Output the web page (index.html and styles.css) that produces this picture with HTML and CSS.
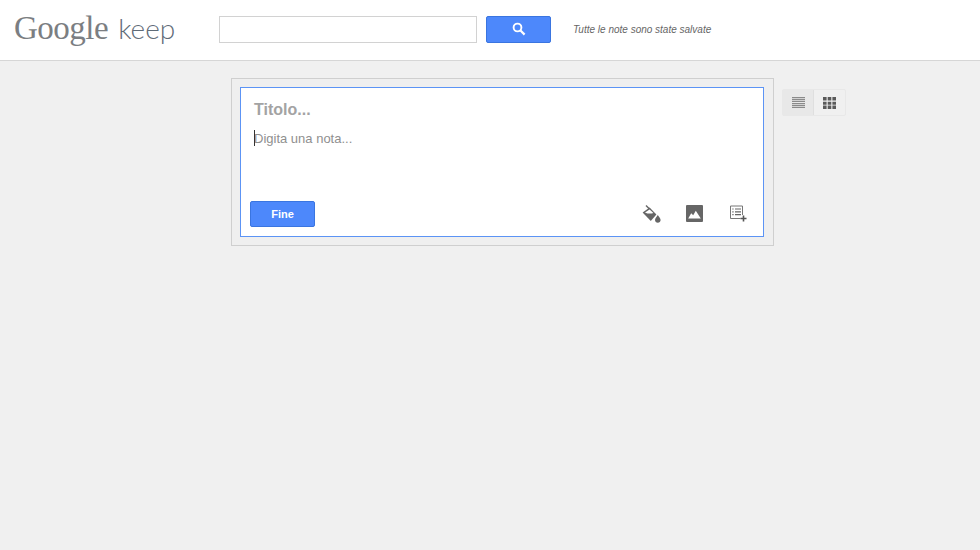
FILE: index.html
```html
<!DOCTYPE html>
<html>
<head>
	<title>Google Keep</title>
	<link rel="stylesheet" href="styles.css">
</head>
<body>
	<header class="top-bar">
		<div class="logo"><span class="logo-google">Google</span><span class="logo-keep">keep</span></div>
		<input class="search-input" type="text">
		<button class="search-button" type="button">
			<svg width="14" height="14" viewBox="0 0 14 14">
				<circle cx="5.5" cy="5.5" r="3.9" fill="none" stroke="#fff" stroke-width="1.9"/>
				<path d="M8.5 8.5L12.6 12.6" stroke="#fff" stroke-width="2.2" fill="none"/>
			</svg>
		</button>
		<span class="save-status">Tutte le note sono state salvate</span>
	</header>
	<main class="content">
		<div class="note-frame">
			<div class="note-editor">
				<div class="note-title">Titolo...</div>
				<div class="note-body"><span class="caret"></span>Digita una nota...</div>
				<div class="note-actions">
					<button class="done-button" type="button">Fine</button>
					<div class="note-tools">
						<!-- vernice -->
						<svg class="paint-icon" width="20" height="18" viewBox="0 0 20 18">
							<path d="M4 .6L8 4.6" stroke="#666" stroke-width="1.4" fill="none"/>
							<path d="M.6 7.6L7.6 2.6L14.4 9.4L8.8 16Z" fill="#666"/>
							<path d="M3 7.4L7.6 4.4L11.4 8C8.6 9 5.5 8.7 3 7.4Z" fill="#fff"/>
							<path d="M15.8 10C16.8 12 18.6 13.2 18.6 15C18.6 16.6 17.4 17.8 15.8 17.8C14.2 17.8 13 16.6 13 15C13 13.2 14.8 12 15.8 10Z" fill="#666"/>
						</svg>
						<!-- immagine -->
						<svg class="image-icon" width="17" height="17" viewBox="0 0 17 17">
							<rect width="17" height="17" rx="1" fill="#666"/>
							<path d="M2.2 13.4L5.2 8.2L7.2 10.2L9.8 5.8L14.8 13.4Z" fill="#fff"/>
						</svg>
						<!-- lista -->
						<svg class="list-icon" width="18" height="17" viewBox="0 0 18 17">
							<path d="M11.5 13.5H1.5V1H13.5V10" fill="none" stroke="#777" stroke-width="1"/>
							<path d="M3.3 4H4.6M6 4H12M3.3 6.8H4.6M6 6.8H12M3.3 9.6H4.6M6 9.6H12" stroke="#666" stroke-width="1.2" fill="none"/>
							<path d="M14.5 10.5V16.5M11.5 13.5H17.5" stroke="#555" stroke-width="1.6" fill="none"/>
						</svg>
					</div>
				</div>
			</div>
		</div>
		<div class="view-switch">
			<div class="view-button active">
				<svg width="13" height="11" viewBox="0 0 13 11">
					<path d="M0 .6H13M0 2.6H13M0 4.5H13M0 6.5H13M0 8.4H13M0 10.4H13" stroke="#8a8a8a" stroke-width="1.2" fill="none"/>
				</svg>
			</div>
			<div class="view-button">
				<svg width="13" height="12" viewBox="0 0 13 12">
					<path d="M0 0h3.6v3.6H0zM4.7 0h3.6v3.6H4.7zM9.4 0H13v3.6H9.4zM0 4.7h3.6v3.1H0zM4.7 4.7h3.6v3.1H4.7zM9.4 4.7H13v3.1H9.4zM0 8.6h3.6V12H0zM4.7 8.6h3.6V12H4.7zM9.4 8.6H13V12H9.4z" fill="#5a5a5a"/>
				</svg>
			</div>
		</div>
	</main>
</body>
</html>
```

FILE: styles.css
```css
html, body {
	margin: 0;
	height: 100%;
}
body {
	background-color: #f0f0f0;
	font-family: "Liberation Sans", Arial, sans-serif;
	overflow: hidden;
}
button {
	font-family: inherit;
	padding: 0;
	cursor: pointer;
}

.top-bar {
	display: flex;
	align-items: flex-start;
	height: 44px;
	padding: 16px 0 0 14px;
	background-color: #fff;
	border-bottom: 1px solid #d6d6d6;
}
.logo {
	display: flex;
	align-items: baseline;
	width: 205px;
	margin-top: -6px;
	color: #7b7e82;
	white-space: nowrap;
}
.logo-google {
	font-family: "Liberation Serif", serif;
	font-size: 33px;
	letter-spacing: -0.5px;
}
.logo-keep {
	margin-left: 10px;
	font-family: "Lato", sans-serif;
	font-weight: 300;
	font-size: 28px;
	color: #5f6b78;
}
.search-input {
	box-sizing: border-box;
	width: 258px;
	height: 27px;
	margin: 0;
	border: 1px solid #d2d2d2;
	background: #fff;
}
.search-button {
	display: flex;
	align-items: center;
	justify-content: center;
	width: 65px;
	height: 27px;
	margin-left: 9px;
	padding-bottom: 1px;
	background-color: #4d88fb;
	border: 1px solid #3a75e0;
	border-radius: 2px;
}
.save-status {
	margin-left: 22px;
	line-height: 27px;
	font-size: 10px;
	font-style: italic;
	color: #666;
}

.content {
	display: flex;
	align-items: flex-start;
	padding: 17px 0 0 231px;
}
.note-frame {
	box-sizing: border-box;
	width: 543px;
	height: 168px;
	padding: 8px 9px 8px 8px;
	border: 1px solid #cfcfcf;
	background-color: #efefef;
}
.note-editor {
	display: flex;
	flex-direction: column;
	box-sizing: border-box;
	height: 100%;
	padding: 13px 9px 9px 9px;
	border: 1px solid #5c94f5;
	background-color: #fff;
}
.note-title {
	padding-left: 4px;
	font-size: 16px;
	line-height: 18px;
	font-weight: bold;
	color: #a3a3a3;
}
.note-body {
	position: relative;
	margin-top: 11px;
	padding-left: 4px;
	font-size: 13px;
	line-height: 18px;
	color: #8f8f8f;
}
.caret {
	position: absolute;
	left: 4px;
	top: 0;
	width: 1px;
	height: 16px;
	background-color: #333;
}
.note-actions {
	display: flex;
	justify-content: space-between;
	align-items: center;
	margin-top: auto;
}
.done-button {
	width: 65px;
	height: 26px;
	background-color: #4d88fb;
	border: 1px solid #3a75e0;
	border-radius: 2px;
	color: #fff;
	font-size: 11px;
	font-weight: bold;
}
.note-tools {
	display: flex;
	align-items: center;
	gap: 25px;
	padding-right: 7px;
	margin-top: -1px;
}
.paint-icon {
	margin-right: -1px;
}
.image-icon {
	margin-right: 1px;
}

.view-switch {
	display: flex;
	margin: 11px 0 0 8px;
	border: 1px solid #e8e8e8;
	border-radius: 2px;
}
.view-button {
	display: flex;
	align-items: center;
	justify-content: center;
	width: 31px;
	height: 25px;
}
.view-button.active {
	background-color: #e8e8e8;
	border-right: 1px solid #dfdfdf;
	width: 30px;
}
```
